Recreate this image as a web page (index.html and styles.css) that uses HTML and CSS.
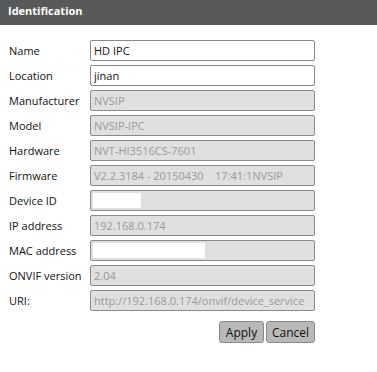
FILE: index.html
```html
<!DOCTYPE html>
<html lang="en">
<head>
  <meta charset="UTF-8">
  <title>Identification</title>
  <link rel="stylesheet" href="styles.css">
</head>
<body>

  <!-- Panel header -->
  <div class="header">Identification</div>

  <!-- Device info form -->
  <div class="form">
    <div class="row">
      <label>Name</label>
      <input type="text" class="field" value="HD IPC">
    </div>
    <div class="row">
      <label>Location</label>
      <input type="text" class="field" value="jinan">
    </div>
    <div class="row">
      <label>Manufacturer</label>
      <input type="text" class="field" value="NVSIP" disabled>
    </div>
    <div class="row">
      <label>Model</label>
      <input type="text" class="field" value="NVSIP-IPC" disabled>
    </div>
    <div class="row">
      <label>Hardware</label>
      <input type="text" class="field" value="NVT-HI3516CS-7601" disabled>
    </div>
    <div class="row">
      <label>Firmware</label>
      <input type="text" class="field" value="V2.2.3184 - 20150430&nbsp;&nbsp;&nbsp; 17:41:1NVSIP" disabled>
    </div>
    <div class="row">
      <label>Device ID</label>
      <div class="field masked"><span class="mask mask-short"></span></div>
    </div>
    <div class="row">
      <label>IP address</label>
      <input type="text" class="field" value="192.168.0.174" disabled>
    </div>
    <div class="row">
      <label>MAC address</label>
      <div class="field masked"><span class="mask mask-long"></span></div>
    </div>
    <div class="row">
      <label>ONVIF version</label>
      <input type="text" class="field" value="2.04" disabled>
    </div>
    <div class="row">
      <label>URI:</label>
      <input type="text" class="field" value="http://192.168.0.174/onvif/device_service" disabled>
    </div>

    <div class="actions">
      <button class="btn btn-apply">Apply</button>
      <button class="btn btn-cancel">Cancel</button>
    </div>
  </div>

</body>
</html>
```

FILE: styles.css
```css
body {
  margin: 0;
  background: #ffffff;
  font-family: "Open Sans", "Noto Sans", sans-serif;
  font-size: 11px;
  color: #111;
}

.header {
  height: 25px;
  background: #595959;
  color: #ffffff;
  font-weight: bold;
  font-size: 11px;
  line-height: 22px;
  padding-left: 8px;
}

.form {
  width: 315px;
  padding-top: 15px;
}

.row {
  display: flex;
  align-items: center;
  height: 21px;
  margin-bottom: 4px;
}

.row label {
  width: 81px;
  padding-left: 9px;
  white-space: nowrap;
}

.field {
  box-sizing: border-box;
  width: 225px;
  height: 21px;
  margin: 0;
  padding: 0 3px;
  border: 1px solid #8a8a8a;
  border-radius: 2px;
  background: #ffffff;
  font-family: inherit;
  font-size: 11px;
  color: #111;
  outline: none;
}

.field:disabled {
  background: #e0e0e0;
  color: #9a9a9a;
  -webkit-text-fill-color: #9a9a9a;
  opacity: 1;
}

.masked {
  display: flex;
  align-items: center;
  background: #e0e0e0;
  padding: 0 2px;
}

.mask {
  display: block;
  height: 15px;
  background: #ffffff;
}

.mask-short {
  width: 48px;
}

.mask-long {
  width: 112px;
}

.actions {
  display: flex;
  justify-content: flex-end;
  gap: 2px;
  margin-top: 10px;
}

.btn {
  height: 22px;
  padding: 0;
  border: 1px solid #8a8a8a;
  border-radius: 3px;
  background: #b9b9b9;
  font-family: inherit;
  font-size: 12px;
  color: #111;
  cursor: pointer;
}

.btn-apply {
  width: 45px;
}

.btn-cancel {
  width: 49px;
}
```
